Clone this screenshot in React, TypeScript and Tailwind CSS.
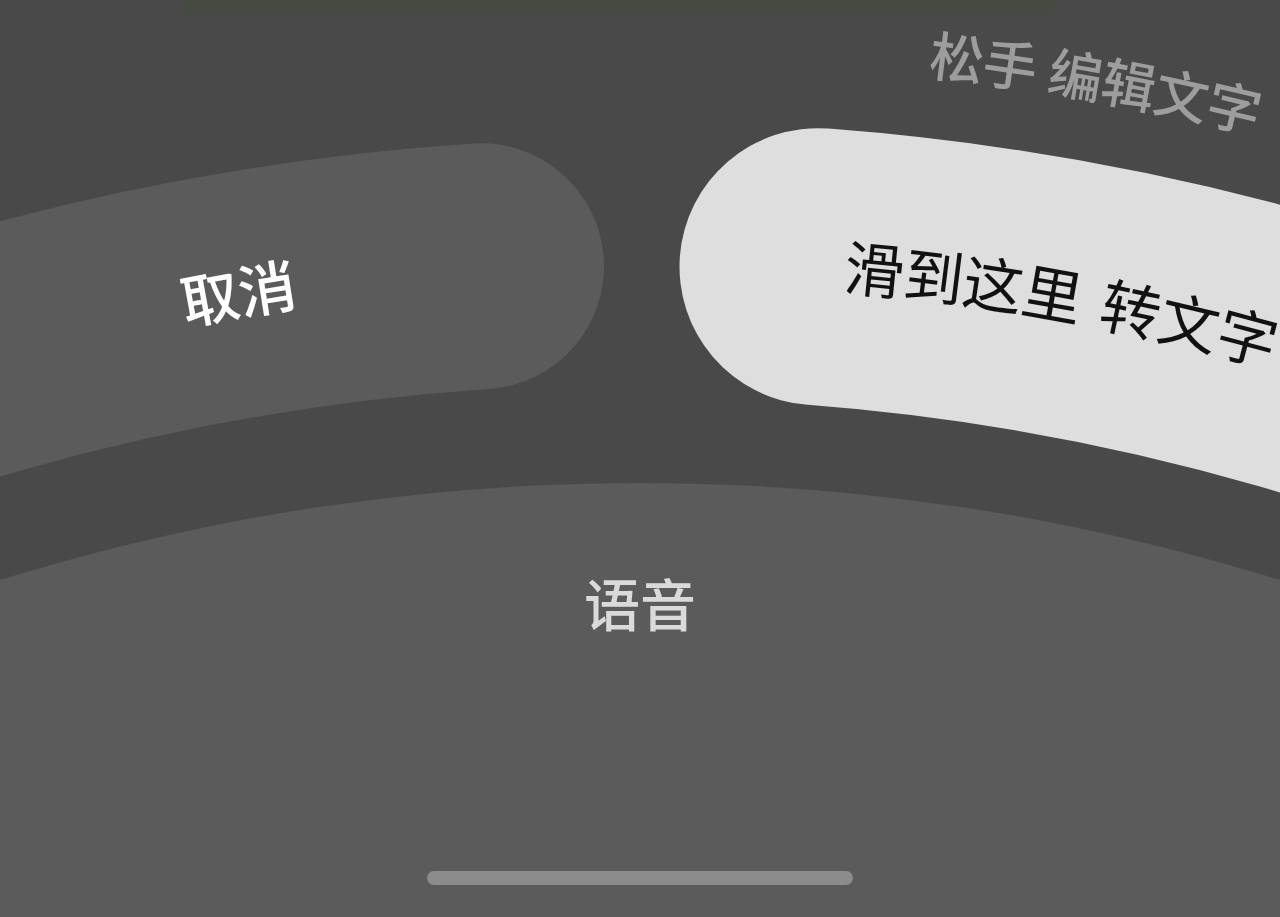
import React from "react";

const FONT = '"Noto Sans CJK SC", "Noto Sans", sans-serif';

// arc centred on the top of a circle, going left -> right
function arcPath(cx: number, cy: number, r: number, fromDeg: number, toDeg: number) {
  const rad = (d: number) => (d * Math.PI) / 180;
  const x1 = cx + r * Math.sin(rad(fromDeg));
  const y1 = cy - r * Math.cos(rad(fromDeg));
  const x2 = cx + r * Math.sin(rad(toDeg));
  const y2 = cy - r * Math.cos(rad(toDeg));
  return `M ${x1} ${y1} A ${r} ${r} 0 0 1 ${x2} ${y2}`;
}

function angleAt(cx: number, r: number, x: number) {
  return (Math.asin((x - cx) / r) * 180) / Math.PI;
}

interface ArcLabel {
  id: string;
  text: string;
  cx: number;
  cy: number;
  r: number;
  x: number;
  size: number;
  color: string;
  weight: number;
}

const LABELS: ArcLabel[] = [
  { id: "cancel", text: "取消", cx: 640, cy: 2640, r: 2384, x: 238, size: 58, color: "#ffffff", weight: 500 },
  { id: "totext", text: "滑到这里\u2004转文字", cx: 640, cy: 2626, r: 2372, x: 1063, size: 60, color: "#111111", weight: 400 },
  { id: "release", text: "松手 编辑文字", cx: 640, cy: 2626, r: 2591, x: 1097, size: 54, color: "#9d9d9d", weight: 500 },
];

function Shapes() {
  const capLeft = angleAt(640, 2380, 481);
  const capRight = angleAt(640, 2366, 818);
  return (
    <svg
      className="absolute inset-0 h-full w-full"
      viewBox="0 0 1280 917"
      preserveAspectRatio="none"
    >
      {/* top strip */}
      <rect x={182} y={0} width={873} height={14} fill="#464a41" />

      {/* cancel pill */}
      <path
        d={arcPath(640, 2641, 2380, -28, capLeft)}
        fill="none"
        stroke="#5b5b5b"
        strokeWidth={246}
        strokeLinecap="round"
      />
      {/* to-text pill (active) */}
      <path
        d={arcPath(640, 2626, 2366, capRight, 28)}
        fill="none"
        stroke="#dedede"
        strokeWidth={277}
        strokeLinecap="round"
      />

      {/* voice area */}
      <circle cx={640} cy={2643} r={2160} fill="#5b5b5b" />

      <defs>
        {LABELS.map((l) => {
          const a = angleAt(l.cx, l.r, l.x);
          return <path key={l.id} id={`arc-${l.id}`} d={arcPath(l.cx, l.cy, l.r, a - 25, a + 25)} />;
        })}
      </defs>
      {LABELS.map((l) => (
        <text
          key={l.id}
          fill={l.color}
          fontSize={l.size}
          fontWeight={l.weight}
          style={{ fontFamily: FONT }}
          dominantBaseline="central"
        >
          <textPath href={`#arc-${l.id}`} startOffset="50%" textAnchor="middle">
            {l.text}
          </textPath>
        </text>
      ))}
    </svg>
  );
}

export default function App() {
  return (
    <div className="relative flex h-[917px] w-full flex-col items-center overflow-hidden bg-[#494949]">
      <Shapes />
      <span
        className="relative mt-[574px] text-[56px] leading-none font-medium text-[#dadada]"
        style={{ fontFamily: FONT }}
      >
        语音
      </span>
      <div className="relative mt-auto mb-[32px] h-[14px] w-[426px] rounded-full bg-[#8c8c8c]" />
    </div>
  );
}
